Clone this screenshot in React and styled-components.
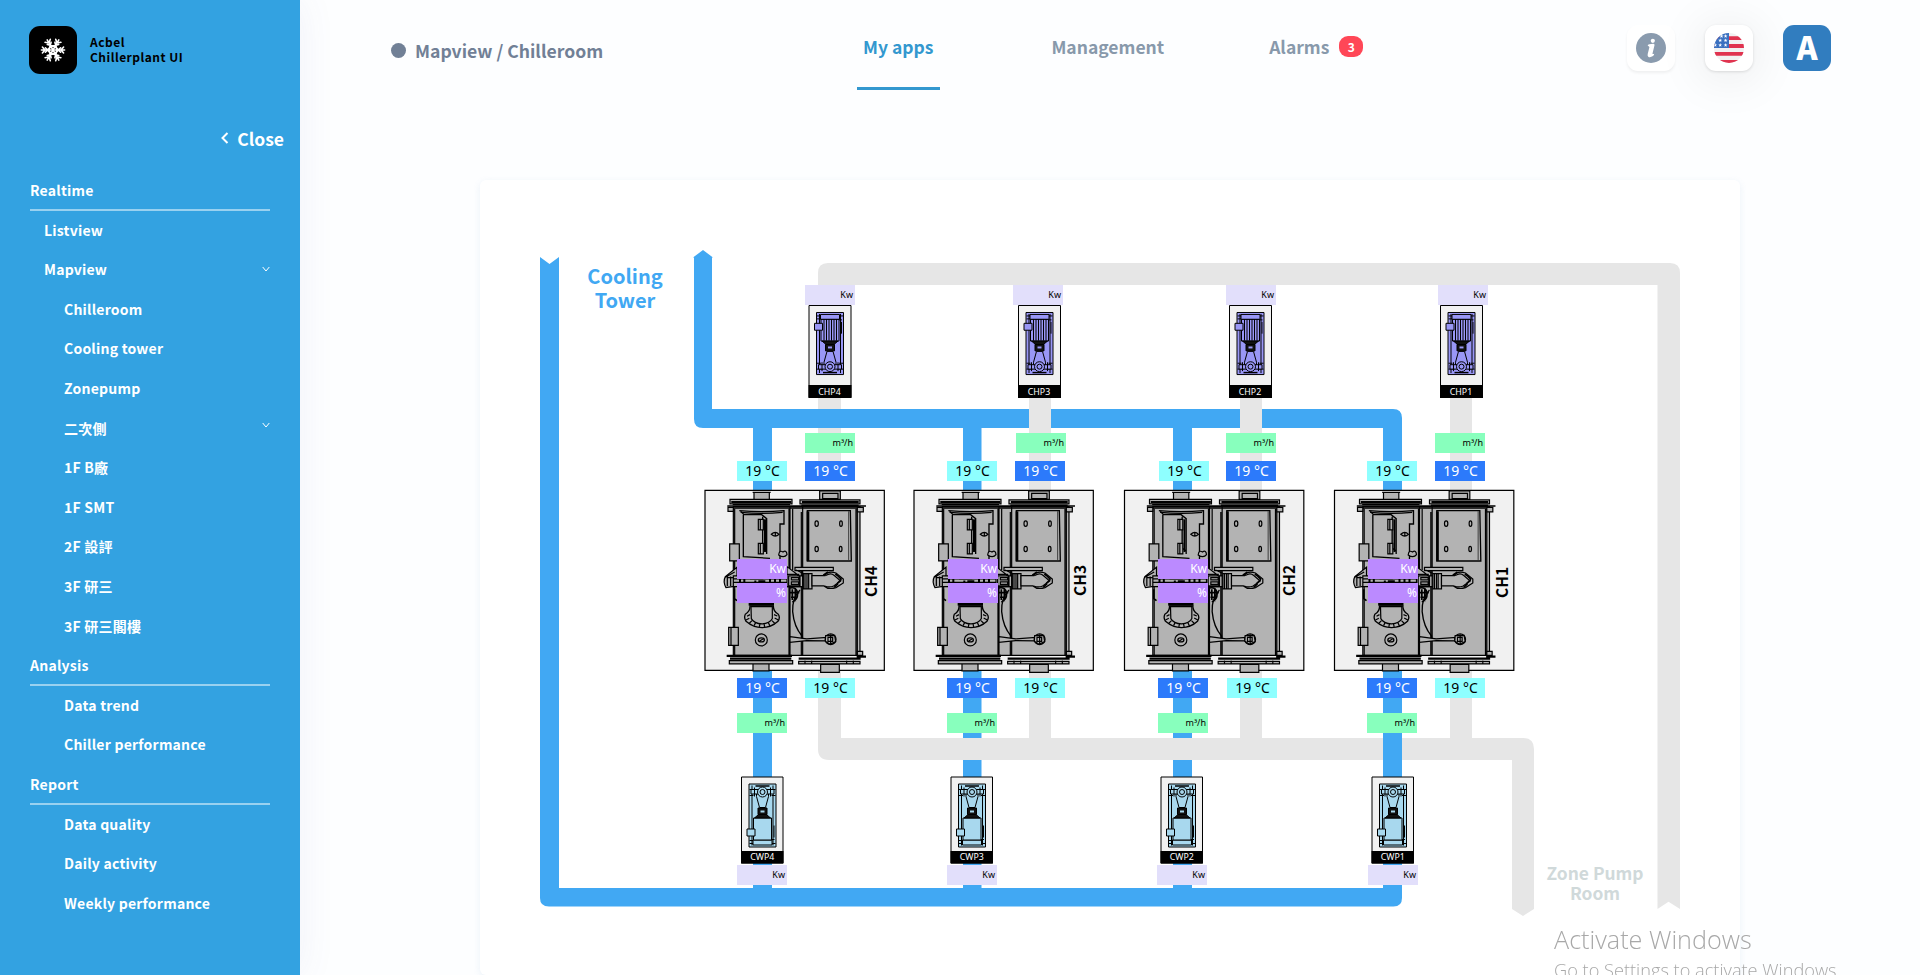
import React from 'react';
import styled, { createGlobalStyle, css } from 'styled-components';

const SANS = '"Noto Sans CJK TC", "Noto Sans", sans-serif';
const LABEL = '"Noto Sans", sans-serif';
const BLUE = '#41a8f3';
const GREY = '#e6e6e6';

const GlobalStyle = createGlobalStyle`
  * { box-sizing: border-box; }
  body { margin: 0; background: #fdfeff; font-family: ${SANS}; overflow: hidden; }
`;

const Page = styled.div`
  display: flex;
  width: 100%;
  height: 975px;
  overflow: hidden;
`;

/* ---------- sidebar ---------- */

const Sidebar = styled.aside`
  flex: 0 0 300px;
  display: flex;
  flex-direction: column;
  background: #33a2e1;
  box-shadow: 0 0 35px rgba(90, 90, 160, 0.08);
  color: #fff;
`;

const Brand = styled.div`
  display: flex;
  align-items: center;
  gap: 13px;
  padding: 26px 0 0 29px;
`;

const BrandMark = styled.div`
  width: 48px;
  height: 48px;
  border-radius: 11px;
  background: #000;
  display: flex;
  align-items: center;
  justify-content: center;
`;

const BrandName = styled.div`
  padding-bottom: 3px;
  color: #000;
  font-size: 12px;
  font-weight: 700;
  line-height: 15px;
  letter-spacing: 0.48px;
`;

const CloseButton = styled.div`
  display: flex;
  align-items: center;
  justify-content: flex-end;
  gap: 8px;
  height: 30px;
  margin: 49px 16px 0 0;
  font-size: 17.5px;
  font-weight: 700;
`;

const Nav = styled.nav`
  padding: 18px 30px 0;
`;

const NavItem = styled.div`
  display: flex;
  align-items: center;
  justify-content: space-between;
  height: 39.6px;
  padding-left: ${(p) => [0, 14, 34][p.$level]}px;
  padding-bottom: 1.5px;
  font-size: 14px;
  font-weight: 700;
  letter-spacing: 0.22px;
  ${(p) =>
    p.$level === 0 &&
    css`
      border-bottom: 2px solid rgba(255, 255, 255, 0.5);
      padding-bottom: 0;
    `}
`;

const NavChevron = styled.svg`
  width: 8px;
  height: 8px;
  margin-bottom: ${(p) => (p.$raised ? 5 : 0)}px;
`;

/* ---------- header ---------- */

const Main = styled.main`
  flex: 1;
  display: flex;
  flex-direction: column;
`;

const Header = styled.header`
  display: flex;
  align-items: flex-start;
  height: 180px;
  flex: none;
  padding-left: 91px;
`;

const Crumb = styled.div`
  display: flex;
  align-items: center;
  gap: 9px;
  width: 466px;
  height: 30px;
  margin-top: 35px;
  color: #718096;
  font-size: 17.6px;
  font-weight: 700;
  white-space: nowrap;
`;

const Dot = styled.span`
  width: 15px;
  height: 15px;
  border-radius: 50%;
  background: #718096;
`;

const Tabs = styled.div`
  display: flex;
  width: 770px;
`;

const Tab = styled.div`
  display: flex;
  align-items: center;
  gap: 10px;
  height: 90px;
  margin-right: ${(p) => p.$after || 0}px;
  padding: 5px 7px 0 6px;
  font-size: 17.5px;
  font-weight: 700;
  color: ${(p) => (p.$active ? '#3398cf' : '#8899ab')};
  border-bottom: 3px solid ${(p) => (p.$active ? '#3398cf' : 'transparent')};
`;

const Count = styled.span`
  display: flex;
  align-items: center;
  justify-content: center;
  width: 24px;
  height: 21px;
  border-radius: 9px;
  background: #ff4757;
  color: #fff;
  font-size: 12px;
`;

const Actions = styled.div`
  display: flex;
  gap: 30px;
  padding-top: 25px;
`;

const ActionButton = styled.div`
  display: flex;
  align-items: center;
  justify-content: center;
  width: 48px;
  height: 46px;
  border-radius: 11px;
  background: ${(p) => (p.$filled ? '#317dbf' : '#fff')};
  color: #fff;
  font-size: 32px;
  font-weight: 900;
  line-height: 42px;
  padding-bottom: ${(p) => (p.$filled ? 4 : 0)}px;
  box-shadow: ${(p) =>
    p.$filled
      ? 'none'
      : p.$lifted
      ? '0 1px 3px rgba(0,0,0,0.12), 0 4px 50px rgba(0,0,0,0.1)'
      : '0 2px 3px rgba(0,0,0,0.06)'};
`;

/* ---------- plant diagram ---------- */

const Canvas = styled.section`
  position: relative;
  width: 1260px;
  height: 860px;
  margin-left: 180px;
  border-radius: 6px;
  background: #fff;
  box-shadow: 0 2px 7px rgba(100, 150, 200, 0.12);
`;

const Drawing = styled.svg`
  display: block;
`;

const tagKinds = {
  power: css`
    background: #e2dffb;
    color: #000;
    font-size: 9px;
    text-align: right;
    padding-right: 2px;
  `,
  flow: css`
    background: #88ffbd;
    color: #000;
    font-size: 9px;
    text-align: right;
    padding-right: 2px;
  `,
  warm: css`
    background: #8effff;
    color: #000;
    font-size: 14px;
    text-align: center;
    padding-left: 1px;
  `,
  cold: css`
    background: #2c7afb;
    color: #fff;
    font-size: 14px;
    text-align: center;
    padding-left: 1px;
  `,
  load: css`
    background: #bb8aff;
    color: #fff;
    font-size: 12px;
    text-align: right;
    padding-right: 1px;
  `,
};

const Tag = styled.div`
  position: absolute;
  left: ${(p) => p.$x - 480}px;
  top: ${(p) => p.$y - 180}px;
  width: 50px;
  height: 20px;
  font-family: ${LABEL};
  line-height: 20px;
  white-space: nowrap;
  ${(p) => tagKinds[p.$kind]}
`;

const AreaLabel = styled.div`
  position: absolute;
  left: ${(p) => p.$x - 480}px;
  top: ${(p) => p.$y - 180}px;
  width: 120px;
  text-align: center;
  font-weight: 700;
  color: ${(p) => p.$color};
  font-size: ${(p) => p.$size}px;
  line-height: ${(p) => p.$line}px;
`;

const Watermark = styled.div`
  position: fixed;
  left: 1554px;
  top: 919px;
  width: 320px;
  height: 56px;
  overflow: hidden;
  font-family: "Open Sans", "Noto Sans", sans-serif;
  font-weight: 300;
  color: #a8a8a8;
  white-space: nowrap;
`;

const WatermarkTitle = styled.div`
  font-size: 25.2px;
  line-height: 40px;
`;

const WatermarkText = styled.div`
  font-size: 18.2px;
  line-height: 22px;
`;

/* ---------- data ---------- */

const NAV = [
  ['Realtime', 0],
  ['Listview', 1],
  ['Mapview', 1, 'open'],
  ['Chilleroom', 2],
  ['Cooling tower', 2],
  ['Zonepump', 2],
  ['二次側', 2, 'raised'],
  ['1F B廠', 2],
  ['1F SMT', 2],
  ['2F 設評', 2],
  ['3F 研三', 2],
  ['3F 研三閣樓', 2],
  ['Analysis', 0],
  ['Data trend', 2],
  ['Chiller performance', 2],
  ['Report', 0],
  ['Data quality', 2],
  ['Daily activity', 2],
  ['Weekly performance', 2],
];

const LINES = [
  { n: 4, x: 705, chp: 808.5, cwp: 741, power: 805, flow: 805, coldIn: 805, warmIn: 737, load: 737, coldOut: 737, warmOut: 805, flowOut: 737, powerOut: 737, tx: 172.3, ty: 581.5 },
  { n: 3, x: 914, chp: 1018, cwp: 950.5, power: 1013, flow: 1016, coldIn: 1015, warmIn: 947, load: 948, coldOut: 947, warmOut: 1015, flowOut: 947, powerOut: 947, tx: 171.8, ty: 580.5 },
  { n: 2, x: 1124.5, chp: 1229, cwp: 1160.5, power: 1226, flow: 1226, coldIn: 1226, warmIn: 1159, load: 1158, coldOut: 1158, warmOut: 1227, flowOut: 1158, powerOut: 1157, tx: 170.8, ty: 580.5 },
  { n: 1, x: 1334.5, chp: 1440, cwp: 1371.5, power: 1438, flow: 1435, coldIn: 1435, warmIn: 1367, load: 1368, coldOut: 1367, warmOut: 1435, flowOut: 1367, powerOut: 1368, tx: 173.5, ty: 582.5 },
];

/* ---------- drawings ---------- */

const Snowflake = () => (
  <svg width="26" height="26" viewBox="-13 -13 26 26" fill="none" stroke="#fff" strokeWidth="1.6" strokeLinecap="round">
    {[0, 60, 120, 180, 240, 300].map((a) => (
      <g key={a} transform={`rotate(${a + 90})`}>
        <path d="M0 0V-11.6M-3-10.6L0-8L3-10.6M-3.4-2L0-5.6L3.4-2M-2.2-7.6L0-5.4L2.2-7.6" />
      </g>
    ))}
  </svg>
);

const InfoIcon = () => (
  <svg width="30" height="30" viewBox="0 0 30 30">
    <circle cx="15" cy="15" r="15" fill="#8a9bae" />
    <circle cx="16.800" cy="7.800" r="2.1" fill="#fff" />
    <path d="M11.700 12.800Q11.700 11.400 13.300 11.200L17.200 10.700Q18.900 10.600 18.500 12.300L16.500 20.500Q16.400 21.400 18.200 20.800Q18.200 22.200 17 23Q14.500 24.700 12.500 23.900Q11.200 23.200 11.700 21L13.400 14.300Q13.500 13.300 11.700 12.800Z" fill="#fff" />
  </svg>
);

const STAR = 'M0-2L.5-.6 2-.6.8.3 1.2 1.7 0 .9-1.2 1.7-.8.3-2-.6-.5-.6Z';

const FlagIcon = () => (
  <svg width="30" height="30" viewBox="0 0 30 30">
    <clipPath id="round"><circle cx="15" cy="15" r="15" /></clipPath>
    <g clipPath="url(#round)">
      <path d="M0 0H30V30H0Z" fill="#f1f1f1" />
      <path d="M0 3.2H30V7H0ZM0 11H30V15H0ZM0 19H30V22.7H0ZM0 27H30V30H0Z" fill="#e0334f" />
      <path d="M0 0H15V15H0Z" fill="#3a70c0" />
      {[[11.6, 3], [6.2, 7.4], [11.6, 7.4], [1.2, 12], [6.2, 12], [11.6, 12], [7.5, 3.2]].map(([x, y]) => (
        <path key={`${x}-${y}`} d={STAR} transform={`translate(${x} ${y})`} fill="#fff" />
      ))}
    </g>
  </svg>
);

const Chiller = ({ x, n, tx, ty }) => (
  <g>
    <g transform={`translate(${x} 490.3) scale(.3333) translate(-45 -31)`} stroke="#000" strokeWidth="3.6" fill="#b3b3b3">
      <path d="M45 31H583V571H45Z" fill="#f1f1f1" />
      <path d="M192 37H238V60H192ZM188 37H242M389 33H451V58H389ZM398 40H444V56H398Z" />
      <path d="M189 550H237V573H189ZM392 553H448V577H392Z" />
      <path d="M130 80H510V526H130Z" />
      <path d="M300 80V526M338 80V526M297 86V526M334 96V526M498 86V526M502 86V526M134 86V526M308 86V270" />
      <path d="M120 58H306V72H120ZM330 60H510V72H330ZM128 74H300M334 76H506" />
      <path d="M124 66H304M336 66H506" strokeWidth="6" />
      <path d="M112 78H528M118 84H520" strokeWidth="5" />
      <path d="M502 82H520V96H502ZM114 82H130V94H114ZM502 514H518V526H502Z" />
      <path d="M110 528H306M120 536H304M326 536H512M500 530H528" strokeWidth="7" />
      <path d="M118 542H308V552H118ZM326 544H510V552H326ZM345 552V542M365 552V542M470 552V542M490 552V542" />
      <path d="M119 192H148V243H119ZM116 442H145V496H116ZM123 442V496" />
      <path d="M148 92Q215 98 282 92V132H270V238M160 104H215L230 116V222M160 104V230L240 235M218 110V204L230 214M150 92L162 104" fill="none" strokeWidth="4" />
      <path d="M225 118V216" strokeWidth="6" />
      <path d="M152 97Q215 103 278 97" fill="none" strokeWidth="4" />
      <path d="M205 118H220V150H205ZM205 190H220V222H205ZM211 118V150M211 190V222" />
      <path d="M244 163Q256 151 267 163Q256 174 244 163ZM256 156V170" />
      <path d="M266 225Q268 209 279 216Q290 209 291 224Q282 236 266 225Z" />
      <path d="M352 92H481L484 243H352Z" strokeWidth="4" /><path d="M354 94V243" strokeWidth="8" />
      <path d="M476 94V240" strokeWidth="2" />
      <ellipse cx="380" cy="131" rx="5" ry="8" /><ellipse cx="453" cy="131" rx="4" ry="8" />
      <ellipse cx="380" cy="207" rx="5" ry="8" /><ellipse cx="452" cy="207" rx="4" ry="8" />
      <path d="M315 262H430V272H315ZM318 270L345 283" />
      <path d="M340 281H366V327H340ZM345 281V327M351 281V327M356 281V327" />
      <path d="M366 287L405 287Q412 272 438 279L460 297V309L438 323Q415 330 402 318H366Z" />
      <path d="M407 287Q422 277 432 286L452 303L431 318Q418 324 404 318" fill="none" />
      <path d="M436 282L447 290M444 288L455 299M453 300L442 310M444 311L433 322M400 286L414 276" strokeWidth="5" />
      <path d="M141 262L106 290Q98 305 108 323L141 318ZM112 293H141M112 290V318M122 290V318M106 292L134 276" />
      <path d="M133 328V356L141 362" strokeWidth="5" fill="none" />
      <path d="M130 288H338V320H130ZM130 297H300M130 307H300" />
      <path d="M150 295V310M163 295V310M180 295H220M196 302V311M205 304H226M240 295V310M255 295V310M270 295V310" strokeWidth="6" />
      <path d="M291 260L330 290V320H291ZM296 288H328V318H296ZM304 293H326V300H304ZM304 306H326V313H304ZM286 283H328" />
      <path d="M300 324Q320 320 323 340Q323 360 307 366M307 328V360M316 324V364M300 338H328M303 352H322" fill="none" strokeWidth="5" />
      <path d="M330 330Q306 355 308 395Q312 440 336 468V480" fill="none" strokeWidth="4" />
      <path d="M300 470L350 477L410 472V483L350 482L300 487Z" />
      <circle cx="422" cy="478" r="16" strokeWidth="4" />
      <path d="M407 467L434 466L437 485L420 493L406 484ZM422 464V492M414 472H428V484H414Z" />
      <path d="M180 378Q181 394 166 403Q161 414 168 424Q190 443 216 443Q244 443 264 424Q272 412 264 402Q250 394 250 378Z" strokeWidth="4" />
      <path d="M183 380H247V416Q240 431 216 432Q192 431 184 416Z" />
      <path d="M171 409L180 404M168 420L178 415M178 430L186 422M192 437L197 428M208 441L210 431M224 441L222 431M240 438L235 428M254 430L246 422M265 420L254 414M262 408L252 404" />
      <path d="M176 373H252" strokeWidth="8" />
      <circle cx="214" cy="480" r="18" /><ellipse cx="214" cy="480" rx="9" ry="6" strokeWidth="4" /><path d="M209 483L219 477" />
    </g>
    <text transform={`translate(${x + tx} ${ty}) rotate(-90)`} textAnchor="middle" fontFamily={SANS} fontWeight="700" fontSize="15.5">{`CH${n}`}</text>
  </g>
);

const PumpBody = ({ color, ribs }) => (
  <g stroke="#000" strokeWidth="1" fill={color}>
    <path d="M.5.5H27.5V63.5H.5Z" />
    <path d="M3.5 2V62M24.5 2V62" />
    <path d="M1 4H7M1 7H5M21 4H27M23 8H26M1 52H5M1 58H7M23 52H27M21 58H27M25.5 10V22" />
    <path d="M4.5 2.5H23.5V7.500H4.5Z" />
    <path d="M5 7.500H23V29.500H5Z" />
    {ribs && <path d="M8 7.500V29M10.5 7.500V29M13 7.500V29M15.5 7.500V29M18 7.500V29M20.5 7.500V29" />}
    <path d="M6 29.500H22L18 33H10Z" fill="#111" />
    <path d="M9.500 33H18.500V39.500H9.500Z" fill="#111" />
    <path d="M12 35H16V37H12Z" stroke="none" />
    <path d="M11 40H17L20 51V56H8V51Z" />
    <path d="M2.5 53.5H25.5V58H2.5ZM6 51V60M22 51V60" />
    <path d="M7 61.5H21" strokeWidth="1.500" />
    <circle cx="14" cy="55.5" r="5" />
    <circle cx="14" cy="55.5" r="2.5" />
    <path d="M-1.5 11.5H6.5V18.5H-1.5Z" />
  </g>
);

const ChilledPump = ({ x, n }) => (
  <g transform={`translate(${x} 305)`}>
    <path d="M.5.5H42.5V92.5H.5Z" fill="#f1f1f1" stroke="#000" />
    <path d="M0 80H43V93H0Z" />
    <g transform="translate(7.5 7) scale(1 .985)"><PumpBody color="#9997f6" ribs /></g>
    <text x="21" y="90" textAnchor="middle" fill="#fff" fontFamily="Noto Sans" fontSize="8.800">{`CHP${n}`}</text>
  </g>
);

const CoolingPump = ({ x, n }) => (
  <g transform={`translate(${x} 776.5)`}>
    <path d="M.5.5H42V86.5H.5Z" fill="#f1f1f1" stroke="#000" />
    <path d="M0 74.5H42.5V87H0Z" />
    <g transform="translate(7.5 71) scale(1 -1)"><PumpBody color="#a8d8ee" /></g>
    <text x="21.3" y="83.7" textAnchor="middle" fill="#fff" fontFamily="Noto Sans" fontSize="8.8">{`CWP${n}`}</text>
  </g>
);

const Plant = () => (
  <Drawing width="1260" height="795" viewBox="480 180 1260 795">
    {/* chilled water, behind the cooling loop */}
    <g fill={GREY}>
      <path d="M818 480V273Q818 263 828 263H1670Q1680 263 1680 273V909L1668.500 901.700L1657.500 909V285H841V480Z" />
      <path d="M1450 390H1472V495H1450Z" />
    </g>
    {/* cooling water */}
    <g fill={BLUE}>
      <path d="M540 257L549.500 264L559 257V888H1383V660H1402V898Q1402 906.500 1393.500 906.500H549Q540 906.500 540 898Z" />
      <path d="M693 257.500L703 250L713 257.500H712V409H1393Q1402 409 1402 418V492H1383V428H703Q694 428 694 419V257.500Z" />
      <path d="M753 428H772V492H753ZM963 428H981.500V492H963ZM1173 428H1192V492H1173Z" />
      <path d="M753 665H772V890H753ZM963 665H981.500V890H963ZM1173 665H1192V890H1173Z" />
    </g>
    <g fill={GREY}>
      <path d="M1029 390H1051V492H1029ZM1240 390H1262V492H1240Z" />
      <path d="M818 665H841V738H1523Q1534 738 1534 749V909L1523 916L1512 909V760H829Q818 760 818 749Z" />
      <path d="M1029 665H1051V740H1029ZM1240 665H1262V740H1240ZM1450 665H1472V740H1450Z" />
    </g>
    <path d="M1383 665H1402V780H1383Z" fill={BLUE} />
    {LINES.map((l) => (
      <g key={l.n}>
        <Chiller x={l.x} n={l.n} tx={l.tx} ty={l.ty} />
        <ChilledPump x={l.chp} n={l.n} />
        <CoolingPump x={l.cwp} n={l.n} />
      </g>
    ))}
  </Drawing>
);

const Readings = ({ l }) => (
  <>
    <Tag $kind="power" $x={l.power} $y={285}>Kw</Tag>
    <Tag $kind="flow" $x={l.flow} $y={433}>m³/h</Tag>
    <Tag $kind="warm" $x={l.warmIn} $y={461}>19 °C</Tag>
    <Tag $kind="cold" $x={l.coldIn} $y={461}>19 °C</Tag>
    <Tag $kind="load" $x={l.load} $y={559}>Kw</Tag>
    <Tag $kind="load" $x={l.load} $y={583}>%</Tag>
    <Tag $kind="cold" $x={l.coldOut} $y={678}>19 °C</Tag>
    <Tag $kind="warm" $x={l.warmOut} $y={678}>19 °C</Tag>
    <Tag $kind="flow" $x={l.flowOut} $y={713}>m³/h</Tag>
    <Tag $kind="power" $x={l.powerOut} $y={865}>Kw</Tag>
  </>
);

export default function App() {
  return (
    <Page>
      <GlobalStyle />
      <Sidebar>
        <Brand>
          <BrandMark><Snowflake /></BrandMark>
          <BrandName>Acbel<br />Chillerplant UI</BrandName>
        </Brand>
        <CloseButton>
          <svg width="8" height="12" viewBox="0 0 8 12" fill="none" stroke="#fff" strokeWidth="2"><path d="M6.500 1L1.500 6L6.500 11" /></svg>
          Close
        </CloseButton>
        <Nav>
          {NAV.map(([text, level, mark]) => (
            <NavItem key={text} $level={level}>
              {text}
              {mark && (
                <NavChevron $raised={mark === 'raised'} viewBox="0 0 8 8" fill="none" stroke="#fff">
                  <path d="M.7 2L4 6L7.300 2" />
                </NavChevron>
              )}
            </NavItem>
          ))}
        </Nav>
      </Sidebar>
      <Main>
        <Header>
          <Crumb><Dot />Mapview / Chilleroom</Crumb>
          <Tabs>
            <Tab $active $after={105}>My apps</Tab>
            <Tab $after={92}>Management</Tab>
            <Tab>Alarms<Count>3</Count></Tab>
          </Tabs>
          <Actions>
            <ActionButton><InfoIcon /></ActionButton>
            <ActionButton $lifted><FlagIcon /></ActionButton>
            <ActionButton $filled>A</ActionButton>
          </Actions>
        </Header>
        <Canvas>
          <Plant />
          {LINES.map((l) => <Readings key={l.n} l={l} />)}
          <AreaLabel $x={565} $y={264} $size={20} $line={24} $color={BLUE}>Cooling<br />Tower</AreaLabel>
          <AreaLabel $x={1535} $y={863} $size={17.4} $line={20} $color="#d0d9da">Zone Pump<br />Room</AreaLabel>
        </Canvas>
      </Main>
      <Watermark>
        <WatermarkTitle>Activate Windows</WatermarkTitle>
        <WatermarkText>Go to Settings to activate Windows.</WatermarkText>
      </Watermark>
    </Page>
  );
}
